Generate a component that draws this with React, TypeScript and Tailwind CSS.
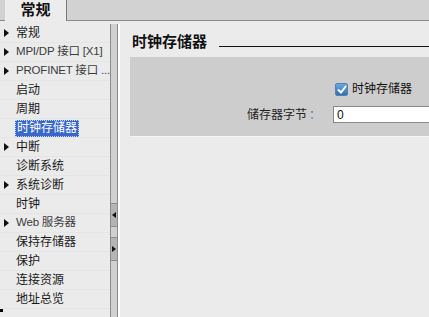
import React from "react";

const font = { fontFamily: '"Liberation Sans", "Noto Sans CJK SC", sans-serif' };

function Tri() {
  return (
    <svg width="6" height="8" viewBox="0 0 6 8" className="shrink-0">
      <path d="M0 0 L5 4 L0 8 Z" fill="#111" />
    </svg>
  );
}

const items: { label: string; arrow?: boolean; selected?: boolean; gray?: boolean }[] = [
  { label: "常规", arrow: true },
  { label: "MPI/DP 接口 [X1]", arrow: true, gray: true },
  { label: "PROFINET 接口 ...", arrow: true, gray: true },
  { label: "启动" },
  { label: "周期" },
  { label: "时钟存储器", selected: true },
  { label: "中断", arrow: true },
  { label: "诊断系统" },
  { label: "系统诊断", arrow: true },
  { label: "时钟" },
  { label: "Web 服务器", arrow: true, gray: true },
  { label: "保持存储器" },
  { label: "保护" },
  { label: "连接资源" },
  { label: "地址总览" },
];

export default function App() {
  return (
    <div className="w-[429px] h-[317px] overflow-hidden bg-[#ebebeb] flex flex-col text-[12px] text-[#1a1a1a]" style={font}>
      {/* top tab bar */}
      <div className="h-[21px] shrink-0 bg-[#d2d2d2] border-b border-[#8a8a8a] flex items-end">
        <div className="w-[5px]" />
        <div className="h-[21px] w-[62px] bg-[#ececec] border-r border-[#7a7a7a] flex items-center justify-center font-bold text-[15px] text-[#111] -mb-px">
          常规
        </div>
      </div>
      <div className="flex flex-1 min-h-0">
        {/* nav */}
        <div className="w-[110px] shrink-0 pt-[3px] flex flex-col">
          {items.map((it) => (
            <div key={it.label} className="h-[19px] flex items-center pl-[4px] border-b border-[#e5e5e5] whitespace-nowrap overflow-hidden">
              <div className="w-[12px] shrink-0 flex items-center">{it.arrow && <Tri />}</div>
              {it.selected ? (
                <span className="px-[1px] h-[17px] -ml-px flex items-center bg-[#3868c8] text-white border border-dotted border-[#c8d4f0]">{it.label}</span>
              ) : (
                <span className={it.gray ? "text-[#3c3c3c] text-[11.5px] tracking-[-0.2px]" : ""}>{it.label}</span>
              )}
            </div>
          ))}
          <div className="flex-1 relative">
            <div className="absolute left-0 bottom-[5px] w-[3px] h-[3px] bg-black" />
          </div>
        </div>
        {/* splitter */}
        <div className="w-[10px] shrink-0 flex pt-[3px]">
          <div className="w-[8px] bg-[#d0d0d0] border-x border-[#8c8c8c] flex flex-col">
            <div className="h-[179px]" />
            <div className="h-[24px] bg-[#b4b4b4] border-y border-[#8c8c8c] flex items-center justify-center">
              <svg width="4" height="6" viewBox="0 0 4 6"><path d="M4 0 L0 3 L4 6 Z" fill="#111" /></svg>
            </div>
            <div className="h-[10px]" />
            <div className="h-[24px] bg-[#b4b4b4] border-y border-[#8c8c8c] flex items-center justify-center">
              <svg width="4" height="6" viewBox="0 0 4 6"><path d="M0 0 L4 3 L0 6 Z" fill="#111" /></svg>
            </div>
          </div>
          <div className="w-[2px] bg-white" />
        </div>
        {/* content */}
        <div className="flex-1 flex flex-col pl-[10px]">
          <div className="h-[36px] flex items-center pt-[7px]">
            <span className="font-bold text-[15px] text-[#111] ml-[2px]">时钟存储器</span>
            <div className="flex-1 h-px bg-[#111] ml-[12px] mt-[8px]" />
          </div>
          <div className="h-[80px] bg-[#cdcdcd] border-b border-[#f4f4f4] flex flex-col">
            <div className="h-[24px]" />
            <div className="flex items-center h-[16px] pl-[205px]">
              <div className="w-[13px] h-[13px] rounded-[2px] border border-[#5a7fa8] bg-gradient-to-b from-[#6aa8e0] to-[#2f6fb8] flex items-center justify-center">
                <svg width="10" height="9" viewBox="0 0 10 9"><path d="M1 4.5 L4 7.5 L9 1" stroke="#fff" strokeWidth="2" fill="none" /></svg>
              </div>
              <span className="ml-[4px] text-[#111]">时钟存储器</span>
            </div>
            <div className="h-[9px]" />
            <div className="flex items-center h-[17px] pl-[117px]">
              <span className="w-[86px] text-[#222]">储存器字节<span className="text-[#777] ml-[2px]">：</span></span>
              <div className="flex-1 h-[17px] bg-white border border-[#8a8a8a] border-r-0 flex items-center pl-[3px] text-[#111]">0</div>
            </div>
          </div>
        </div>
      </div>
    </div>
  );
}
